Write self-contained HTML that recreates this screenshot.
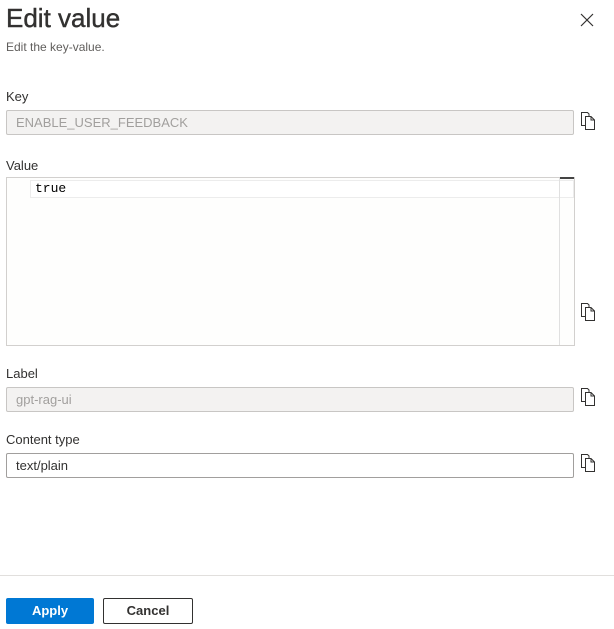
<!DOCTYPE html>
<html><head><style>
body{margin:0;width:614px;height:629px;background:#fff;font-family:"Liberation Sans",sans-serif;position:relative;overflow:hidden;color:#323130}
.a{position:absolute}
h1{position:absolute;left:6px;top:3px;margin:0;font-size:26px;font-weight:normal;color:#323130;-webkit-text-stroke:0.4px #323130}
.lbl{position:absolute;left:6px;font-size:13px;color:#323130}
.in{position:absolute;left:6px;width:565px;height:23px;border:1px solid #a19f9d;border-radius:2px;box-sizing:content-box;font-size:13px;line-height:23px;padding-left:9px;width:557px}
.dis{background:#f3f2f1;border-color:#c8c6c4;color:#a19f9d}
.cp{position:absolute;left:580px;width:17px;height:19px}
</style></head><body>
<h1>Edit value</h1>
<div class="a" style="left:6px;top:40px;font-size:12px;color:#605e5c">Edit the key-value.</div>
<svg class="a" style="left:580px;top:13px" width="14" height="14"><path d="M1 1L13 13M13 1L1 13" stroke="#323130" stroke-width="1.2"/></svg>
<div class="lbl" style="top:89px">Key</div>
<div class="in dis" style="top:110px">ENABLE_USER_FEEDBACK</div>
<div class="lbl" style="top:158px">Value</div>
<div class="a" style="left:6px;top:177px;width:567px;height:167px;border:1px solid #d2d0ce;background:#fefefd"></div>
<div class="a" style="left:30px;top:180px;width:538px;height:16px;border:1px solid #ececec;background:#fff;font-family:'Liberation Mono',monospace;font-size:13px;line-height:16px;color:#000;padding-left:4px">true</div>
<div class="a" style="left:559px;top:178px;width:1px;height:167px;background:#e0e0e0"></div>
<div class="a" style="left:560px;top:177px;width:14px;height:2px;background:#444"></div>
<div class="lbl" style="top:366px">Label</div>
<div class="in dis" style="top:387px">gpt-rag-ui</div>
<div class="lbl" style="top:432px">Content type</div>
<div class="in" style="top:453px;color:#323130">text/plain</div>
<div class="a" style="left:0;top:575px;width:614px;height:1px;background:#e1dfdd"></div>
<div class="a" style="left:6px;top:598px;width:88px;height:26px;background:#0078d4;border-radius:2px;color:#fff;font-size:13px;font-weight:bold;text-align:center;line-height:26px">Apply</div>
<div class="a" style="left:103px;top:598px;width:88px;height:24px;border:1px solid #323130;border-radius:2px;font-size:13px;font-weight:bold;text-align:center;line-height:24px">Cancel</div>
<svg width="0" height="0" style="position:absolute"><defs><g id="c"><path d="M1.5 1.5H7.5L9 3V14.5H1.5Z" fill="#fff" stroke="#323130" stroke-width="1"/><path d="M5.5 5.5H11L14.5 9V18.5H5.5Z" fill="#fff" stroke="#323130" stroke-width="1"/><path d="M11 5.5V9H14.5" fill="none" stroke="#323130"/></g></defs></svg>
<svg class="cp" style="top:111px"><use href="#c"/></svg>
<svg class="cp" style="top:302px"><use href="#c"/></svg>
<svg class="cp" style="top:387px"><use href="#c"/></svg>
<svg class="cp" style="top:453px"><use href="#c"/></svg>
</body></html>
